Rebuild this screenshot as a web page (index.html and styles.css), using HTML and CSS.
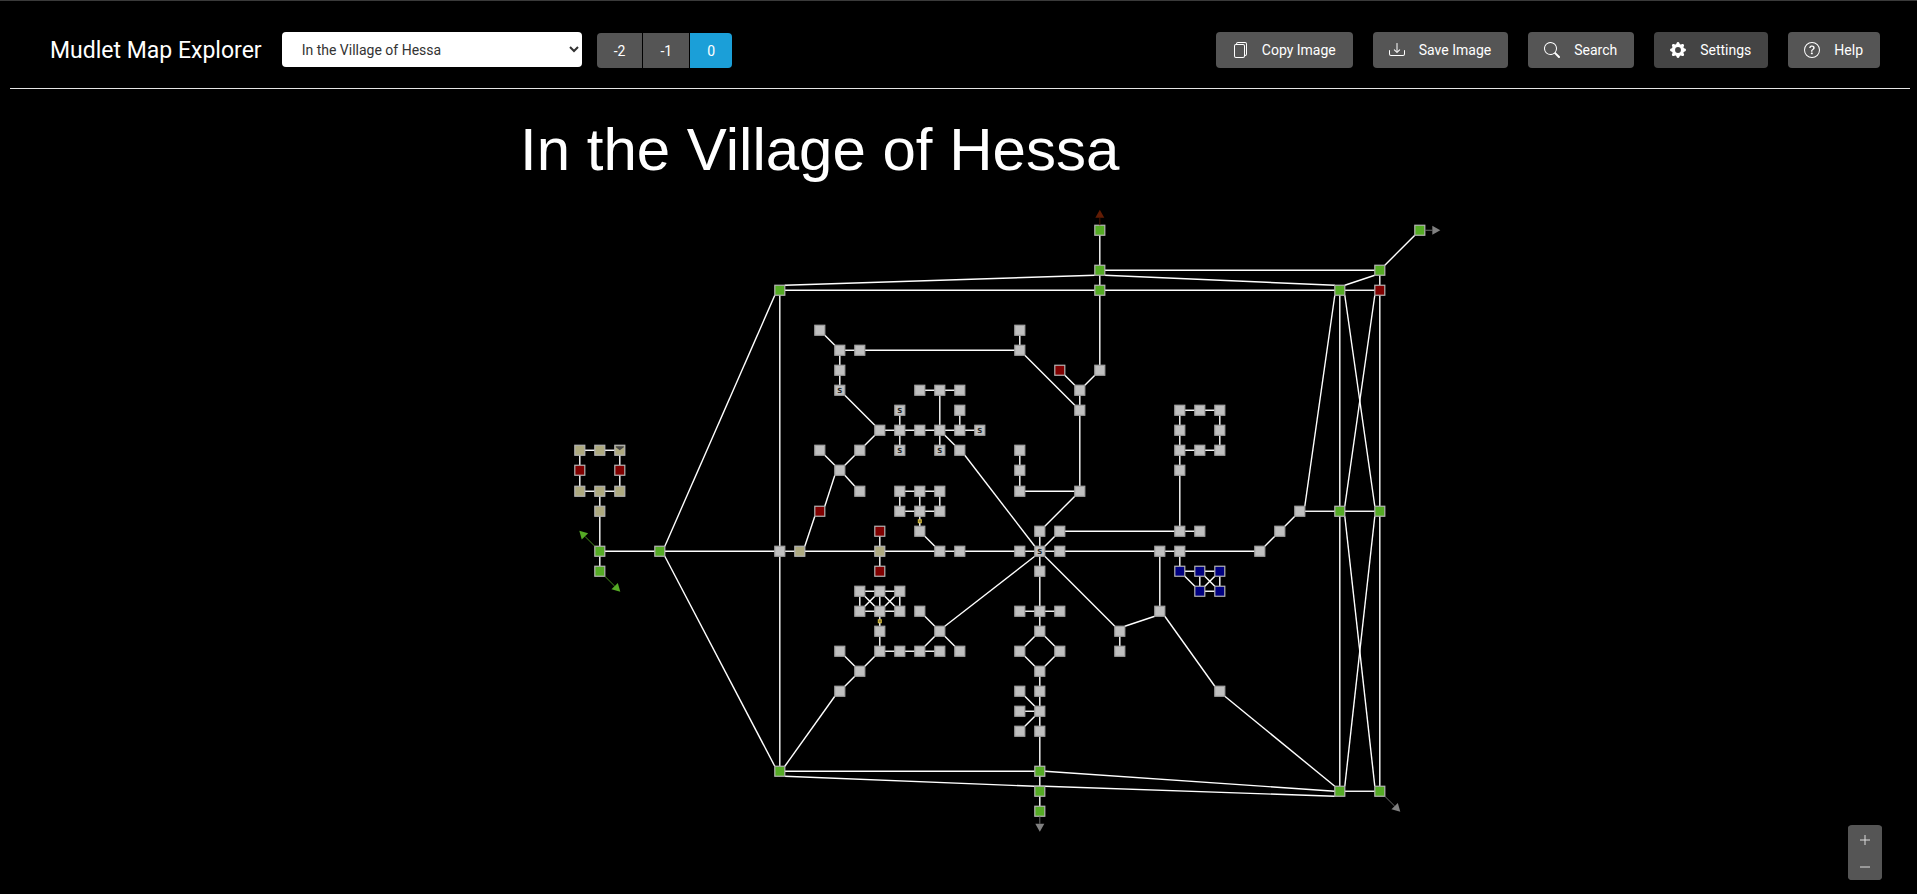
FILE: index.html
```html
<!DOCTYPE html>
<html lang="en">
<head>
<meta charset="utf-8">
<title>Mudlet Map Explorer</title>
<link rel="stylesheet" href="styles.css">
</head>
<body>
<header class="toolbar">
  <h1 class="brand">Mudlet Map Explorer</h1>
  <select class="area-select" aria-label="Area">
    <option>In the Village of Hessa</option>
  </select>
  <div class="levels" role="group" aria-label="Level">
    <button class="level" type="button">-2</button>
    <button class="level" type="button">-1</button>
    <button class="level level-active" type="button">0</button>
  </div>
  <div class="actions">
    <button class="btn" type="button">
      <svg class="icon" viewBox="0 0 16 16" aria-hidden="true"><path d="M13 0H6a2 2 0 0 0-2 2 2 2 0 0 0-2 2v10a2 2 0 0 0 2 2h7a2 2 0 0 0 2-2 2 2 0 0 0 2-2V2a2 2 0 0 0-2-2zm0 13V4a2 2 0 0 0-2-2H5a1 1 0 0 1 1-1h7a1 1 0 0 1 1 1v10a1 1 0 0 1-1 1zM3 4a1 1 0 0 1 1-1h7a1 1 0 0 1 1 1v10a1 1 0 0 1-1 1H4a1 1 0 0 1-1-1V4z"/></svg>
      Copy Image
    </button>
    <button class="btn" type="button">
      <svg class="icon" viewBox="0 0 16 16" aria-hidden="true"><path d="M.5 8a.5.5 0 0 1 .5.5V12a1 1 0 0 0 1 1h12a1 1 0 0 0 1-1V8.500a.5.5 0 0 1 1 0V12a2 2 0 0 1-2 2H2a2 2 0 0 1-2-2V8.500A.5.5 0 0 1 .5 8z"/><path d="M5 7.500a.5.5 0 0 1 .707 0L8 9.793 10.293 7.500a.5.5 0 1 1 .707.707l-2.646 2.647a.5.5 0 0 1-.708 0L5 8.207A.5.5 0 0 1 5 7.500z"/><path d="M8 1a.5.5 0 0 1 .5.5v8a.5.5 0 0 1-1 0v-8A.5.5 0 0 1 8 1z"/></svg>
      Save Image
    </button>
    <button class="btn" type="button">
      <svg class="icon" viewBox="0 0 16 16" aria-hidden="true"><path d="M11.742 10.344a6.500 6.500 0 1 0-1.397 1.398h-.001c.03.04.062.078.098.115l3.850 3.850a1 1 0 0 0 1.415-1.414l-3.850-3.850a1.007 1.007 0 0 0-.115-.1zM12 6.500a5.500 5.500 0 1 1-11 0 5.500 5.500 0 0 1 11 0z"/></svg>
      Search
    </button>
    <button class="btn btn-pressed" type="button">
      <svg class="icon" viewBox="0 0 16 16" aria-hidden="true"><path d="M9.405 1.050c-.413-1.400-2.397-1.400-2.810 0l-.1.340a1.464 1.464 0 0 1-2.105.872l-.31-.17c-1.283-.698-2.686.705-1.987 1.987l.169.311c.446.820.023 1.841-.872 2.105l-.34.100c-1.400.413-1.400 2.397 0 2.810l.34.100a1.464 1.464 0 0 1 .872 2.105l-.17.310c-.698 1.283.705 2.686 1.987 1.987l.311-.169a1.464 1.464 0 0 1 2.105.872l.1.340c.413 1.400 2.397 1.400 2.810 0l.1-.34a1.464 1.464 0 0 1 2.105-.872l.31.170c1.283.698 2.686-.705 1.987-1.987l-.169-.311a1.464 1.464 0 0 1 .872-2.105l.34-.1c1.400-.413 1.400-2.397 0-2.810l-.34-.1a1.464 1.464 0 0 1-.872-2.105l.17-.31c.698-1.283-.705-2.686-1.987-1.987l-.311.169a1.464 1.464 0 0 1-2.105-.872l-.1-.34zM8 10.930a2.929 2.929 0 1 1 0-5.860 2.929 2.929 0 0 1 0 5.858z"/></svg>
      Settings
    </button>
    <button class="btn" type="button">
      <svg class="icon" viewBox="0 0 16 16" aria-hidden="true"><path d="M8 15A7 7 0 1 1 8 1a7 7 0 0 1 0 14zm0 1A8 8 0 1 0 8 0a8 8 0 0 0 0 16z"/><path d="M5.255 5.786a.237.237 0 0 0 .241.247h.825c.138 0 .248-.113.266-.25.090-.656.540-1.134 1.342-1.134.686 0 1.314.343 1.314 1.168 0 .635-.374.927-.965 1.371-.673.489-1.206 1.060-1.168 1.987l.003.217a.25.25 0 0 0 .25.246h.811a.25.25 0 0 0 .25-.25v-.105c0-.718.273-.927 1.010-1.486.609-.463 1.244-.977 1.244-2.056 0-1.511-1.276-2.241-2.673-2.241-1.267 0-2.655.590-2.750 2.286zm1.557 5.763c0 .533.425.927 1.010.927.609 0 1.028-.394 1.028-.927 0-.552-.42-.94-1.029-.94-.584 0-1.009.388-1.009.940z"/></svg>
      Help
    </button>
  </div>
</header>
<main class="stage">
  <svg class="map" id="map" viewBox="0 89 1917 805" role="img" aria-label="Area map">
    <text class="map-title" x="520" y="170">In the Village of Hessa</text>
  </svg>
  <div class="zoom">
    <button class="zoom-btn" type="button" aria-label="Zoom in"><svg class="zoom-icon" viewBox="0 0 10 10" aria-hidden="true"><path d="M0 5H10M5 0V10"/></svg></button>
    <button class="zoom-btn" type="button" aria-label="Zoom out"><svg class="zoom-icon" viewBox="0 0 10 10" aria-hidden="true"><path d="M0 5H10"/></svg></button>
  </div>
</main>
<script src="map.js"></script>
</body>
</html>
```
FILE: styles.css
```css
* { box-sizing: border-box; }

body {
  margin: 0;
  min-height: 100vh;
  display: flex;
  flex-direction: column;
  background: #000;
  border-top: 1px solid #3a3a3a;
  color: #fff;
  font-family: Roboto, "Liberation Sans", sans-serif;
  font-size: 14px;
}

button { font: inherit; color: inherit; border: 0; margin: 0; cursor: pointer; }

.toolbar {
  flex: none;
  display: flex;
  align-items: center;
  margin: 0 7px 0 10px;
  padding: 31px 30px 20px 40px;
  border-bottom: 1px solid #e5e5e5;
}

.brand { margin: 0 20px 0 0; padding-top: 2px; font-size: 23px; font-weight: 400; line-height: 34px; white-space: nowrap; }

.area-select {
  align-self: flex-start;
  width: 300px;
  height: 35px;
  padding: 0 0 0 16px;
  border: 0;
  border-radius: 4px;
  background: #fff;
  color: #333;
  font: inherit;
}

.levels { align-self: flex-end; display: flex; gap: 1px; margin-left: 15px; border-radius: 4px; overflow: hidden; }
.level { height: 35px; padding: 0 17px; background: #555; }
.level-active { background: #1b9fd8; }

.actions { display: flex; gap: 20px; margin-left: auto; }
.btn {
  display: flex;
  align-items: center;
  gap: 14px;
  height: 36px;
  padding: 0 17px 0 16px;
  border-radius: 4px;
  background: #555;
  white-space: nowrap;
}
.btn-pressed { background: #444; }
.icon { width: 16px; height: 16px; fill: #fff; }

.stage { position: relative; flex: 1; display: flex; min-height: 0; }
.map { display: block; flex: 1; width: 100%; min-width: 0; }
.map-title { fill: #fff; font: 60px "Liberation Sans", Arial, sans-serif; }

.exit { stroke: #fff; stroke-width: 1.4; }
.room { stroke: #b4b4b4; stroke-width: 1.2; }
.road { fill: #c0c0c0; stroke: #a4a4a4; }
.grass { fill: #55ab25; }
.path { fill: #aeaa80; }
.closed { fill: #800000; }
.water { fill: #000080; }
.door { fill: #8a7a38; stroke: #d8c040; }
.stairs { fill: #444; }
.mark { fill: #222; font: bold 7px "DejaVu Sans", sans-serif; text-anchor: middle; }
.out-green { fill: #55ab25; stroke: #458c1e; }
.out-gray { fill: #808080; stroke: #6a6a6a; }
.out-red { fill: #621c04; stroke: #4a1402; }
.head { stroke: none; }

.zoom {
  position: absolute;
  right: 35px;
  bottom: 14px;
  display: flex;
  flex-direction: column;
  padding-top: 1px;
  border-radius: 4px;
  background: #555;
  overflow: hidden;
}
.zoom-btn { display: grid; place-items: center; width: 34px; height: 27px; padding: 0; background: #555; }
.zoom-icon { width: 10px; height: 10px; stroke: #ddd; fill: none; }
```
FILE: map.js
```js
const NS = 'http://www.w3.org/2000/svg';
const map = document.getElementById('map');
const HALF = 5;

const px = c => 579.8 + 20 * c;
const py = r => 230.25 + 20 * r + (r >= 13 ? 1 : 0);

function add(tag, cls, attrs) {
  const el = document.createElementNS(NS, tag);
  el.setAttribute('class', cls);
  for (const k in attrs) el.setAttribute(k, attrs[k]);
  map.appendChild(el);
  return el;
}

// Rooms by terrain, as column,row pairs
const rooms = {
  grass: '26,0 26,2 26,3 42,0 40,2 38,3 10,3 38,14 40,14 38,28 40,28 10,27 23,27 23,28 23,29 4,16 1,16 1,17',
  path: '0,11 1,11 2,11 0,13 1,13 2,13 1,14 11,16 15,16',
  closed: '0,12 2,12 24,7 40,3 12,14 15,15 15,17',
  water: '30,17 31,17 32,17 31,18 32,18',
  road: '12,5 13,6 14,6 13,7 13,8 15,10 16,9 16,10 16,11 17,8 18,8 19,8 19,9 19,10 20,10 18,10 17,10 18,11 19,11 14,11 12,11 13,12 14,13 16,13 17,13 18,13 16,14 17,14 18,14 22,5 22,6 22,11 22,12 22,13 10,16 17,15 18,16 19,16 22,16 14,18 15,18 16,18 14,19 15,19 16,19 17,19 18,20 15,20 13,21 15,21 16,21 17,21 18,21 19,21 14,22 13,23 26,7 25,8 25,9 25,13 23,15 24,15 30,9 31,9 32,9 30,10 32,10 30,11 31,11 32,11 30,12 30,15 31,15 23,16 24,16 23,17 22,19 23,19 24,19 23,20 22,21 24,21 23,22 22,23 23,23 22,24 23,24 22,25 23,25 29,16 30,16 29,19 27,20 27,21 32,23 36,14 35,15 34,16'
};

// Chains of connected rooms
const exits = [
  '26,0 26,2 26,3 26,7 25,8 25,9 25,13 23,15 23,16', '24,7 25,8', '26,2 40,2 42,0',
  '10,3 26,2 38,3 40,2 40,3 40,14 40,28 38,28', '10,3 26,3 38,3 40,3',
  '10,3 4,16 10,27', '10,3 10,16 10,27 23,27', '38,3 38,14 38,28',
  '38,3 40,14 38,28', '40,3 38,14 40,28', '38,3 36,14 38,14 40,14',
  '12,5 13,6 14,6 22,6 25,9', '13,6 13,7 13,8 15,10 14,11 13,12 12,14 11,16',
  '22,5 22,6', '12,11 13,12 14,13', '15,10 16,10 17,10 18,10 19,10 20,10',
  '16,9 16,10 16,11', '17,8 18,8 19,8', '18,8 18,10 18,11', '19,9 19,10',
  '18,10 19,11 23,16', '16,13 17,13 18,13 18,14 17,14 16,14 16,13',
  '17,13 17,14 17,15 18,16', '22,11 22,12 22,13 25,13',
  '0,11 1,11 2,11 2,12 2,13 1,13 0,13 0,12 0,11', '1,13 1,14 1,16 1,17',
  '1,16 4,16 10,16 11,16 15,16 18,16 19,16 22,16 23,16 24,16 29,16 30,16 34,16 35,15 36,14',
  '15,15 15,16 15,17', '14,18 15,18 16,18 16,19 15,19 14,19 14,18',
  '14,18 15,19 16,18', '14,19 15,18 16,19', '15,18 15,19 15,20 15,21 14,22 13,23 10,27',
  '13,21 14,22', '15,21 16,21 17,21 18,21', '17,21 18,20 23,16', '17,19 18,20 19,21',
  '23,16 24,15 30,15 31,15', '30,15 30,12 30,11 30,10 30,9 31,9 32,9 32,10 32,11 31,11 30,11',
  '23,16 23,17 23,19 23,20 22,21 23,22 23,23 23,24 23,25 23,27 23,28 23,29',
  '23,20 24,21 23,22', '22,19 23,19 24,19', '22,23 23,24 22,25', '22,24 23,24',
  '23,16 27,20 29,19 32,23 38,28', '27,20 27,21', '29,16 29,19',
  '30,16 30,17 31,17 32,17 32,18 31,18 30,17', '31,17 31,18 32,17', '31,17 32,18'
];

const parse = s => s.split(' ').map(p => p.split(',').map(Number));

function line(x1, y1, x2, y2, cls = 'exit') {
  add('line', cls, { x1, y1, x2, y2 });
}

for (const chain of exits) {
  const pts = parse(chain);
  for (let i = 1; i < pts.length; i++) {
    const [a, b] = [pts[i - 1], pts[i]];
    const dx = Math.sign(b[0] - a[0]) * HALF;
    const dy = Math.sign(b[1] - a[1]) * HALF;
    line(px(a[0]) + dx, py(a[1]) + dy, px(b[0]) - dx, py(b[1]) - dy);
  }
}

// Exits that leave and arrive on differing sides
line(px(10) + HALF, py(27) + HALF, px(23) - HALF, py(28) - HALF);
line(px(23) - HALF, py(28) - HALF, px(23) + HALF, py(28) - HALF);
line(px(23) + HALF, py(28) - HALF, px(38) - HALF, py(28) + HALF);
line(px(23) + HALF, py(27), px(38) - HALF, py(28));

for (const kind in rooms) {
  for (const [c, r] of parse(rooms[kind])) {
    add('rect', 'room ' + kind, { x: px(c) - HALF, y: py(r) - HALF, width: 10, height: 10 });
  }
}

for (const [c, r] of parse('13,8 16,9 16,11 18,11 20,10 23,16')) {
  add('text', 'mark', { x: px(c), y: py(r) + 3 }).textContent = 'S';
}

for (const [c, r] of parse('17,14 15,19')) {
  add('rect', 'door', { x: px(c) - 1.5, y: py(r) + 8.5, width: 3, height: 3 });
}

add('path', 'stairs', { d: `M${px(2) - 4} ${py(11) - 4}h8v1l-4 3l-4 -3z` });

// Arrows that lead to other areas
function arrow(c, r, dx, dy, cls) {
  const x = px(c), y = py(r);
  const tx = x + 20.5 * dx, ty = y + 20.5 * dy;
  const n = Math.hypot(dx, dy);
  const ux = dx / n, uy = dy / n;
  const bx = tx - 8 * ux, by = ty - 8 * uy;
  line(x + HALF * dx, y + HALF * dy, bx, by, cls);
  add('path', cls + ' head', {
    d: `M${tx} ${ty}L${bx - 4.5 * uy} ${by + 4.5 * ux}L${bx + 4.5 * uy} ${by - 4.5 * ux}z`
  });
}
arrow(1, 16, -1, -1, 'out-green');
arrow(1, 17, 1, 1, 'out-green');
arrow(26, 0, 0, -1, 'out-red');
arrow(42, 0, 1, 0, 'out-gray');
arrow(40, 28, 1, 1, 'out-gray');
arrow(23, 29, 0, 1, 'out-gray');
```
